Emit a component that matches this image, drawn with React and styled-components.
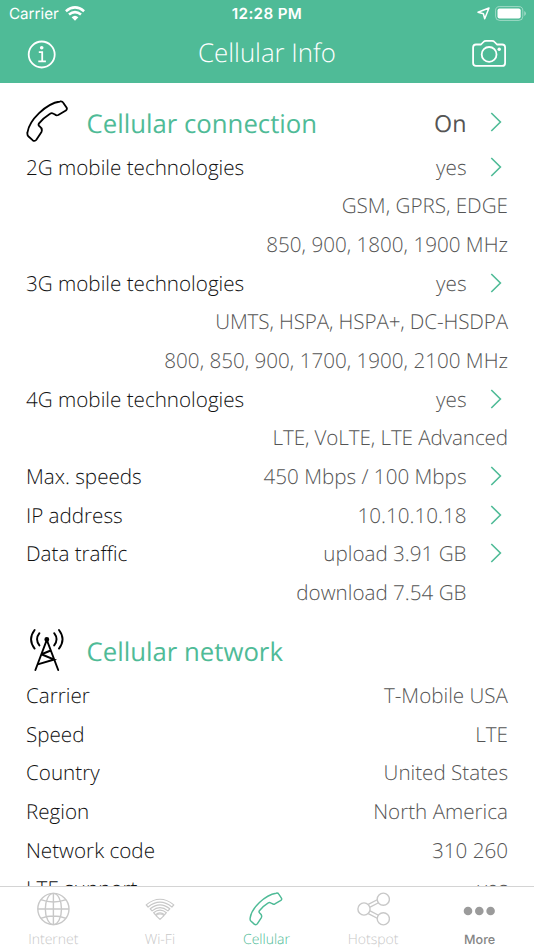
import React from "react";
import styled, { createGlobalStyle } from "styled-components";

const GREEN = "#4fbb97";

const GlobalStyle = createGlobalStyle`
  * { box-sizing: border-box; }
  body { margin: 0; background: #fff; overflow: hidden; text-rendering: geometricPrecision; }
  svg { display: block; flex: none; }
`;

const Screen = styled.div`
  width: 534px;
  height: 950px;
  display: flex;
  flex-direction: column;
  overflow: hidden;
  background: #fff;
  font-family: "Open Sans", sans-serif;
  font-weight: 300;
`;

const TopArea = styled.header`
  flex: none;
  height: 83px;
  background: ${GREEN};
  color: #fff;
`;

const StatusBar = styled.div`
  height: 26px;
  display: grid;
  grid-template-columns: 1fr auto 1fr;
  align-items: center;
  padding: 0 8px 0 9px;
  font-family: Inter, sans-serif;
  font-size: 15.2px;
  font-weight: 400;
`;

const StatusGroup = styled.div`
  display: flex;
  align-items: center;
  gap: ${(p) => p.$gap}px;
  justify-content: ${(p) => (p.$end ? "flex-end" : "flex-start")};
`;

const Clock = styled.div`
  font-weight: 600;
  font-size: 15.2px;
  letter-spacing: 0.35px;
  padding-right: 1px;
`;

const NavBar = styled.div`
  height: 56px;
  display: grid;
  grid-template-columns: 1fr auto 1fr;
  align-items: center;
  padding: 0 27px;
`;

const NavButton = styled.button`
  border: 0;
  padding: 0;
  background: none;
  color: inherit;
  justify-self: ${(p) => (p.$end ? "end" : "start")};
`;

const Title = styled.h1`
  margin: 0;
  font-size: 25.8px;
  line-height: 36px;
  font-weight: 300;
  padding-bottom: 4px;
`;

const Content = styled.main`
  flex: 1;
  min-height: 0;
  overflow: hidden;
  padding: 0 26px;
`;

const SectionHeader = styled.div`
  height: 64.6px;
  padding-top: 15px;
  display: flex;
  align-items: center;
`;

const SectionIcon = styled.div`
  width: 60.5px;
  height: 50px;
  display: flex;
  align-items: center;
  margin-top: -3px;
`;

const SectionTitle = styled.h2`
  flex: 1;
  margin: 0;
  padding-bottom: 0.6px;
  font-size: 25.75px;
  line-height: 36px;
  font-weight: 400;
  color: ${GREEN};
`;

const SectionState = styled.span`
  font-size: 23.3px;
  line-height: 36px;
  font-weight: 400;
  color: #555;
`;

const Row = styled.div`
  height: 38.67px;
  display: flex;
  align-items: center;
  font-size: 20.64px;
  line-height: 30px;
  white-space: nowrap;
`;

const Label = styled.span`
  padding-top: 1.4px;
  color: #111;
`;

const Value = styled.span`
  padding-top: 1.4px;
  margin-left: auto;
  margin-right: ${(p) => (p.$inset ? 41.5 : 0)}px;
  letter-spacing: ${(p) => p.$tracking || 0}px;
  color: #555;
`;

const ArrowSlot = styled.span`
  width: 41.5px;
  display: flex;
  justify-content: flex-end;
  padding-right: 6px;
  padding-bottom: ${(p) => (p.$raised ? 1 : 0)}px;
`;

const TabBar = styled.nav`
  flex: none;
  height: 64px;
  border-top: 1px solid #d4d4d4;
  display: grid;
  grid-template-columns: repeat(5, 1fr);
  padding-right: 1px;
  background: #fff;
`;

const Tab = styled.div`
  display: flex;
  flex-direction: column;
  align-items: center;
  color: ${(p) => p.$color};
`;

const TabIcon = styled.div`
  height: 44px;
  display: flex;
  align-items: center;
  justify-content: center;
`;

const TabLabel = styled.span`
  font-size: 14px;
  line-height: 18px;
  font-family: ${(p) => (p.$system ? "Inter, sans-serif" : "inherit")};
  font-weight: ${(p) => (p.$system ? 500 : 300)};
  ${(p) => p.$system && "font-size: 12.6px; line-height: 20px;"}
`;

const Handset = ({ size, stroke }) => (
  <svg width={size} height={size} viewBox="76 30 129 129" fill="none" stroke="currentColor" strokeWidth={stroke} strokeLinejoin="round">
    <path d="M179 34.5Q186 33 189 38L199 53Q202 58 197 62L174 75.5Q168 78 164 74L158 71Q154 68 149 71.5Q129 84 115.5 101Q112 106 117 110Q127 117 123 127L108 150Q103 157 96 152L83 140Q79 136 80.5 128C86 91 136 41 179 34.5Z" />
  </svg>
);

const Tower = () => (
  <svg width="41" height="44" viewBox="0 0 41 44" fill="none" stroke="#000" strokeWidth="1.9" strokeLinecap="round">
    <path d="M9.4 42 20.8 12 32.2 42M16.2 26 24.7 22.5M16 26.5 28.2 31.5 11.7 36.4" />
    <circle cx="20.8" cy="11.5" r="1.5" fill="#000" />
    <path d="M13.4 5.2Q8.7 11.3 13.4 17.4M28.2 5.2Q32.9 11.3 28.2 17.4M8.6 2Q1.5 11.3 8.6 20.6M33 2Q40.1 11.3 33 20.6" />
  </svg>
);

const Arrow = () => (
  <svg width="12" height="20" viewBox="0 0 12 20" fill="none" stroke={GREEN} strokeWidth="1.6">
    <path d="M1.3 1 10.4 10 1.3 19" />
  </svg>
);

const InfoIcon = () => (
  <svg width="29" height="29" viewBox="0 0 29 29" fill="none" stroke="currentColor" strokeWidth="1.8">
    <circle cx="14.7" cy="14.5" r="13" />
    <path d="M11.8 12.2H15.2V21.3M11.3 21.3H18.9" />
    <circle cx="14.7" cy="7.8" r="1.8" fill="currentColor" stroke="none" />
  </svg>
);

const CameraIcon = () => (
  <svg width="35" height="28" viewBox="0 0 35 28" fill="none" stroke="currentColor" strokeWidth="1.8" strokeLinejoin="round">
    <path d="M4 4.5H9L11.4 2Q12.4 .9 14 .9H20Q21.6 .9 22.6 2L25 4.5H30.2Q33.1 4.5 33.1 7.5V22.9Q33.1 25.9 30.2 25.9H4Q1.1 25.9 1.1 22.9V7.5Q1.1 4.5 4 4.5Z" />
    <circle cx="17.1" cy="14.4" r="7.4" />
    <circle cx="27.2" cy="9.3" r="1.7" fill="currentColor" stroke="none" />
  </svg>
);

const StatusWifi = () => (
  <svg width="20" height="15" viewBox="0 0 20 15" fill="none" stroke="currentColor" strokeWidth="2.6">
    <path d="M.9 5.2Q10-2.3 19.1 5.2M4 8.6Q10 3.6 16 8.6" />
    <path d="M6.6 11.3Q10 8.3 13.4 11.3L10 14.7Z" fill="currentColor" stroke="none" />
  </svg>
);

const LocationIcon = () => (
  <svg width="13" height="13" viewBox="0 0 13 13" fill="none" stroke="currentColor" strokeWidth="1.5" strokeLinejoin="round">
    <path d="M12 1 7.7 11.7 6.4 6.7 1 5.3Z" />
  </svg>
);

const Battery = () => (
  <svg width="31" height="15" viewBox="0 0 31 15" fill="none">
    <rect x=".6" y=".6" width="27.2" height="13.8" rx="4" stroke="#fff" strokeOpacity=".45" />
    <rect x="2.5" y="2.5" width="23.2" height="10" rx="2" fill="#fff" />
    <path d="M29.3 5Q30.8 5.6 30.8 7.5T29.3 10Z" fill="#fff" fillOpacity=".5" />
  </svg>
);

const Globe = () => (
  <svg width="34" height="34" viewBox="0 0 34 34" fill="none" stroke="currentColor" strokeWidth="1.4">
    <circle cx="17.4" cy="17" r="15.6" />
    <ellipse cx="17.4" cy="17" rx="8.1" ry="15.6" />
    <path d="M17.4 1.4V32.6M1.8 17H33M4.7 7.7Q17.4 12.3 30.1 7.7M4.7 26.3Q17.4 21.7 30.1 26.3" />
  </svg>
);

const TabWifi = () => (
  <svg width="30" height="24" viewBox="0 0 30 24" fill="none" stroke="currentColor" strokeWidth="1.2" strokeLinejoin="round">
    <path d="M1.2 7.9Q15-3.4 28.8 7.9L26.9 10Q15 .4 3.1 10Z" />
    <path d="M5.2 11.8Q15 3.8 24.8 11.8L22.9 13.9Q15 7.3 7.1 13.9Z" />
    <path d="M8.6 15.7Q15 10.7 21.4 15.7L19.5 17.8Q15 14.1 10.5 17.8Z" />
    <path d="M11 18.6Q15 15.4 19 18.6L15 22.4Z" />
  </svg>
);

const ShareNodes = () => (
  <svg width="33" height="34" viewBox="0 0 33 34" fill="none" stroke="currentColor" strokeWidth="1.4">
    <path d="M11.3 12.4 20.7 7.5M12.6 15.4 22 10.5M12.6 18.6 22 23.5M11.3 21.6 20.7 26.5" />
    <g fill="#fff">
      <circle cx="7" cy="17" r="6.1" />
      <circle cx="26.3" cy="7.2" r="6.1" />
      <circle cx="26.3" cy="26.8" r="6.1" />
    </g>
  </svg>
);

const Dots = () => (
  <svg width="33" height="14" viewBox="0 0 33 14" fill="#9b9b9b">
    <circle cx="5" cy="9" r="4.3" />
    <circle cx="16.3" cy="9" r="4.3" />
    <circle cx="27.6" cy="9" r="4.3" />
  </svg>
);

const connectionRows = [
  { label: "2G mobile technologies", value: "yes", arrow: true },
  { value: "GSM, GPRS, EDGE" },
  { value: "850, 900, 1800, 1900 MHz" },
  { label: "3G mobile technologies", value: "yes", arrow: true },
  { value: "UMTS, HSPA, HSPA+, DC-HSDPA", tracking: -0.12 },
  { value: "800, 850, 900, 1700, 1900, 2100 MHz" },
  { label: "4G mobile technologies", value: "yes", arrow: true },
  { value: "LTE, VoLTE, LTE Advanced", tracking: -0.1 },
  { label: "Max. speeds", value: "450 Mbps / 100 Mbps", arrow: true },
  { label: "IP address", value: "10.10.10.18", arrow: true },
  { label: "Data traffic", value: "upload 3.91 GB", arrow: true },
  { value: "download 7.54 GB", inset: true },
];

const networkRows = [
  { label: "Carrier", value: "T-Mobile USA" },
  { label: "Speed", value: "LTE" },
  { label: "Country", value: "United States" },
  { label: "Region", value: "North America" },
  { label: "Network code", value: "310 260" },
  { label: "LTE support", value: "yes" },
];

const tabs = [
  { label: "Internet", icon: <Globe />, color: "#c8c8c8" },
  { label: "Wi-Fi", icon: <TabWifi />, color: "#c8c8c8" },
  { label: "Cellular", icon: <Handset size={34} stroke={5.5} />, color: GREEN },
  { label: "Hotspot", icon: <ShareNodes />, color: "#c8c8c8" },
  { label: "More", icon: <Dots />, color: "#858585", system: true },
];

const InfoRow = ({ label, value, arrow, inset, tracking }) => (
  <Row>
    {label && <Label>{label}</Label>}
    <Value $inset={inset} $tracking={tracking}>{value}</Value>
    {arrow && <ArrowSlot><Arrow /></ArrowSlot>}
  </Row>
);

export default function App() {
  return (
    <Screen>
      <GlobalStyle />
      <TopArea>
        <StatusBar>
          <StatusGroup $gap={6}><span>Carrier</span><StatusWifi /></StatusGroup>
          <Clock>12:28 PM</Clock>
          <StatusGroup $gap={5} $end><LocationIcon /><Battery /></StatusGroup>
        </StatusBar>
        <NavBar>
          <NavButton aria-label="Information"><InfoIcon /></NavButton>
          <Title>Cellular Info</Title>
          <NavButton aria-label="Camera" $end><CameraIcon /></NavButton>
        </NavBar>
      </TopArea>
      <Content>
        <SectionHeader>
          <SectionIcon><Handset size={42.5} stroke={5.5} /></SectionIcon>
          <SectionTitle>Cellular connection</SectionTitle>
          <SectionState>On</SectionState>
          <ArrowSlot $raised><Arrow /></ArrowSlot>
        </SectionHeader>
        {connectionRows.map((row, i) => <InfoRow key={i} {...row} />)}
        <SectionHeader>
          <SectionIcon><Tower /></SectionIcon>
          <SectionTitle>Cellular network</SectionTitle>
        </SectionHeader>
        {networkRows.map((row, i) => <InfoRow key={i} {...row} />)}
      </Content>
      <TabBar>
        {tabs.map((tab) => (
          <Tab key={tab.label} $color={tab.color}>
            <TabIcon>{tab.icon}</TabIcon>
            <TabLabel $system={tab.system}>{tab.label}</TabLabel>
          </Tab>
        ))}
      </TabBar>
    </Screen>
  );
}
